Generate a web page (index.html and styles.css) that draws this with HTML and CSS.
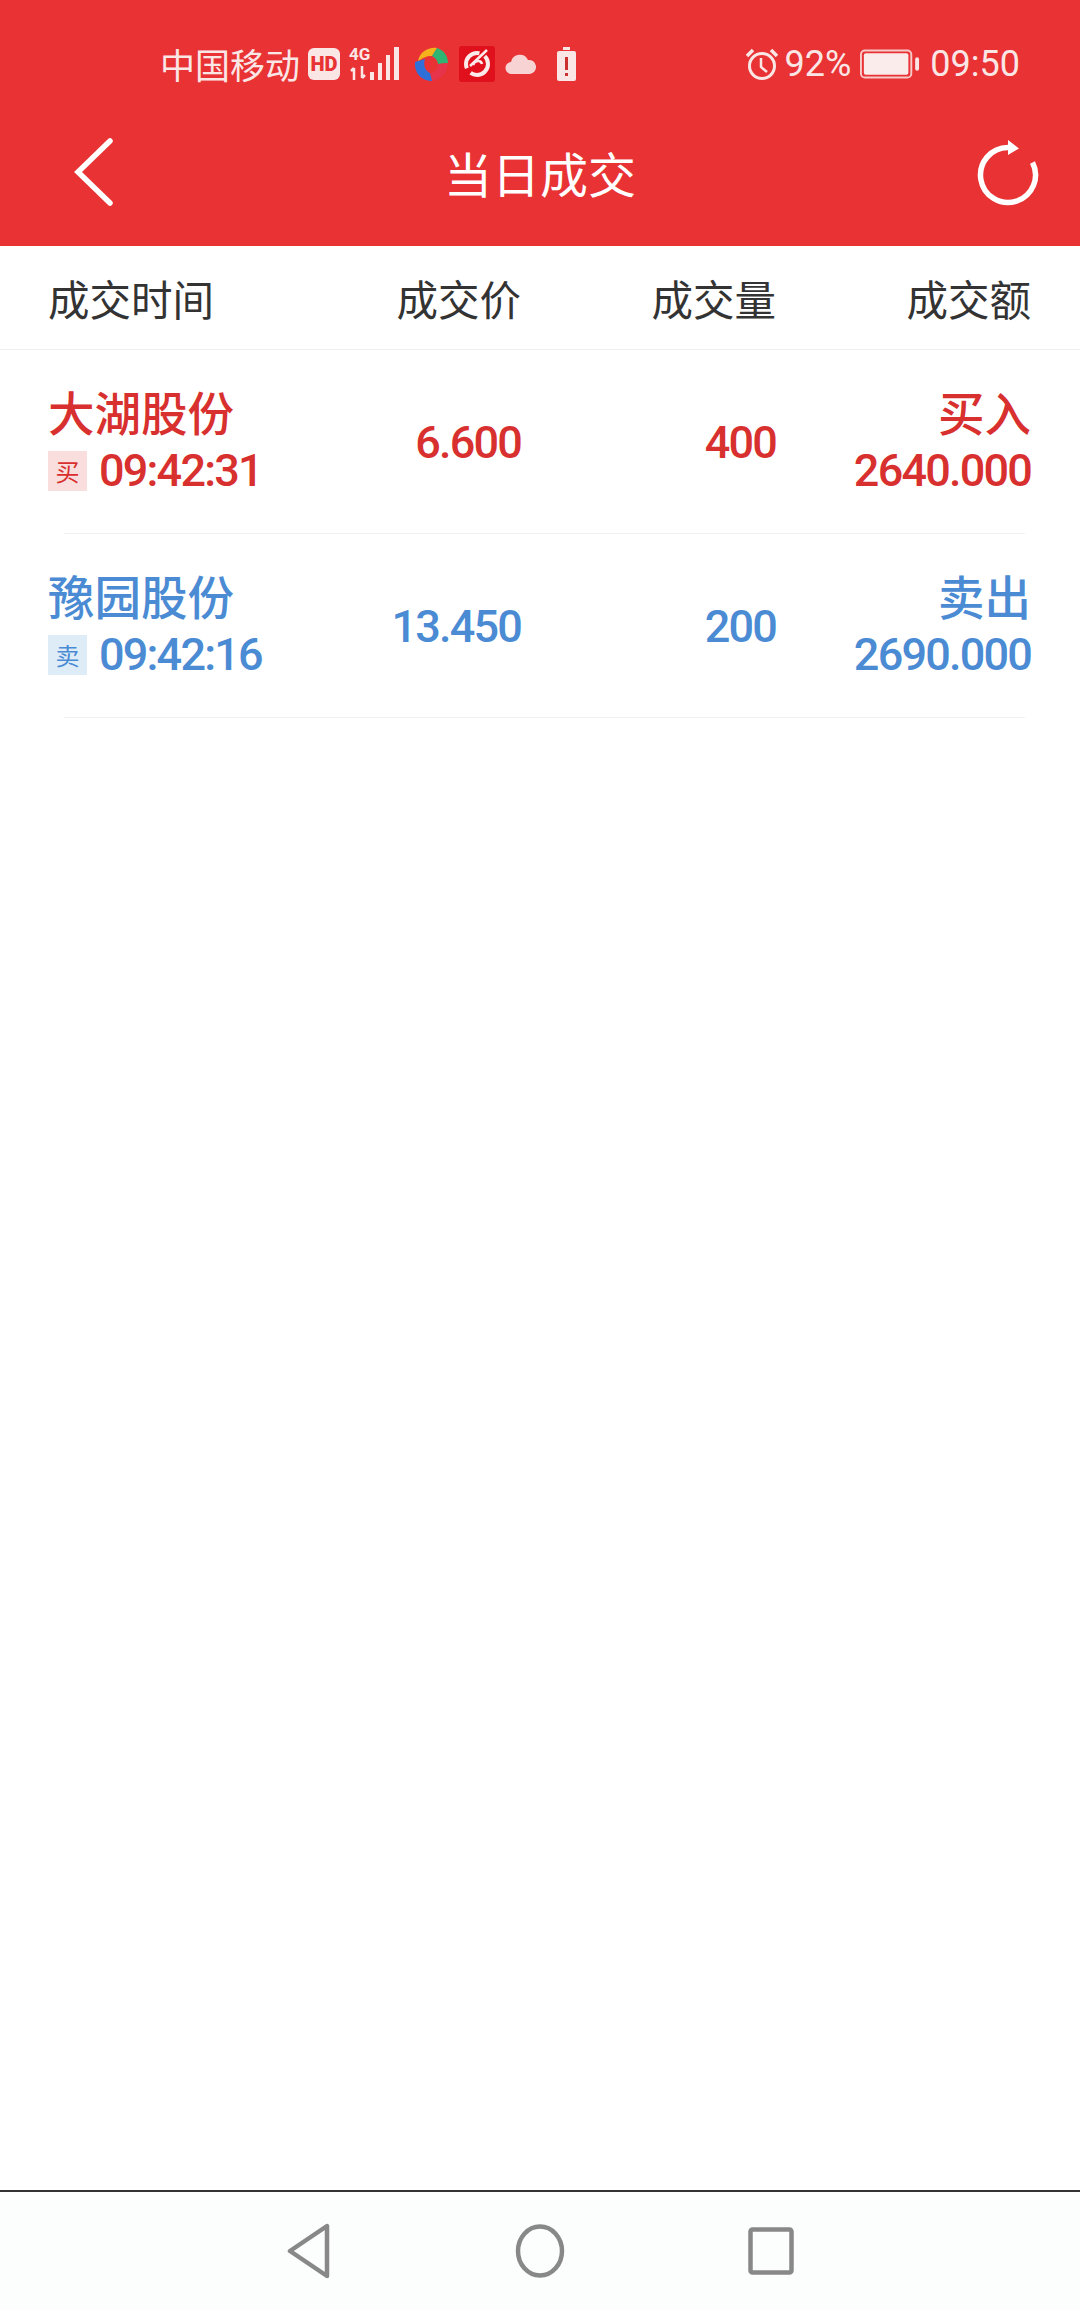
FILE: index.html
```html
<!DOCTYPE html>
<html lang="zh-CN">
<head>
    <meta charset="UTF-8">
    <title>当日成交</title>
    <link rel="stylesheet" href="styles.css">
</head>
<body>
    <div class="page">
        <div class="top">
            <div class="status">
                <span class="carrier">中国移动</span>
                <span class="hd">HD</span>
                <svg class="signal" width="54" height="36" viewBox="0 0 54 36">
                    <text x="0" y="14" class="net">4G</text>
                    <path d="M5 22v12M2 25l3-3M13 20v12M13 32l3-3" stroke="#fbe6e6" stroke-width="2.5" fill="none"/>
                    <rect x="21" y="26" width="4" height="8" fill="#fbe6e6"/>
                    <rect x="29" y="17" width="4" height="17" fill="#fbe6e6"/>
                    <rect x="37" y="9" width="4" height="25" fill="#fbe6e6"/>
                    <rect x="45" y="1" width="5" height="33" fill="#fbe6e6"/>
                </svg>
                <svg class="pin" width="36" height="36" viewBox="0 0 36 36">
                    <path d="M5 15C7 6 15 1 24 2l-5 8c-6 0-9 2-14 5z" fill="#f5b21d"/>
                    <path d="M24 2c7 2 11 8 11 15l-10 1c0-3-2-6-6-8z" fill="#2fb573"/>
                    <path d="M35 17c0 9-7 17-16 18l-2-8c5 0 8-4 8-9z" fill="#e8344a"/>
                    <path d="M19 35C8 35 1 26 2 16l10-3c-2 6 0 12 5 14z" fill="#2f6fd8"/>
                </svg>
                <svg class="pin" width="36" height="36" viewBox="0 0 36 36">
                    <rect width="36" height="36" rx="3" fill="#e0101c"/>
                    <circle cx="18" cy="18" r="11" fill="none" stroke="#fdeaea" stroke-width="4" stroke-dasharray="24 6"/>
                    <path d="M11 20l17-16M14 19c2-5 8-5 9-1" stroke="#fdeaea" stroke-width="2.5" fill="none"/>
                </svg>
                <svg class="pin" width="32" height="22" viewBox="0 0 32 22">
                    <path d="M7 21a6 6 0 0 1-1-12 9 9 0 0 1 17-2 7 7 0 0 1 2 14z" fill="#f7d3d3"/>
                </svg>
                <svg class="pin-far" width="21" height="36" viewBox="0 0 21 36">
                    <path d="M7 1h7v3H7z" fill="#fbe6e6"/>
                    <rect x="1" y="5" width="19" height="30" rx="2" fill="#fbe6e6"/>
                    <path d="M10.500 11v13M10.500 27v3" stroke="#c9302f" stroke-width="3"/>
                </svg>
                <div class="status-right">
                    <svg width="34" height="34" viewBox="0 0 34 34">
                        <circle cx="17" cy="19" r="12.500" fill="none" stroke="#fbe6e6" stroke-width="3"/>
                        <path d="M16 11v9l6 5" fill="none" stroke="#fbe6e6" stroke-width="2.500"/>
                        <path d="M2 9l6-6M32 9l-6-6" stroke="#fbe6e6" stroke-width="3.500"/>
                    </svg>
                    <span class="pct">92%</span>
                    <svg class="batt" width="60" height="30" viewBox="0 0 62 30">
                        <rect x="1" y="1" width="52" height="28" rx="4" fill="none" stroke="#f7c9c9" stroke-width="2"/>
                        <rect x="4" y="4" width="46" height="22" rx="2" fill="#fbecec"/>
                        <rect x="57" y="8" width="4" height="14" rx="2" fill="#fbe6e6"/>
                    </svg>
                    <span class="clock">09:50</span>
                </div>
            </div>
            <div class="nav">
                <div class="nav-side">
                    <svg width="44" height="70" viewBox="0 0 44 70">
                        <path d="M38 4L6 35l32 31" fill="none" stroke="#fff" stroke-width="5.500" stroke-linecap="round"/>
                    </svg>
                </div>
                <h1>当日成交</h1>
                <div class="nav-side right">
                    <svg width="70" height="76" viewBox="0 0 70 76">
                        <path d="M35 13.500A27.500 27.500 0 1 0 59.500 28.500" fill="none" stroke="#fff" stroke-width="5.500"/>
                        <path d="M35 6l11 8.500L35 21z" fill="#fff"/>
                    </svg>
                </div>
            </div>
        </div>

        <div class="list-head">
            <span>成交时间</span>
            <span>成交价</span>
            <span>成交量</span>
            <span>成交额</span>
        </div>

        <div class="row buy">
            <div class="stock">
                <div class="name">大湖股份</div>
                <div class="time"><span class="tag">买</span>09:42:31</div>
            </div>
            <div class="num">6.600</div>
            <div class="num">400</div>
            <div class="amount">
                <div class="name">买入</div>
                <div class="num">2640.000</div>
            </div>
        </div>
        <div class="sep"></div>

        <div class="row sell">
            <div class="stock">
                <div class="name">豫园股份</div>
                <div class="time"><span class="tag">卖</span>09:42:16</div>
            </div>
            <div class="num">13.450</div>
            <div class="num">200</div>
            <div class="amount">
                <div class="name">卖出</div>
                <div class="num">2690.000</div>
            </div>
        </div>
        <div class="sep"></div>

        <div class="empty"></div>

        <div class="softkeys">
            <svg width="46" height="56" viewBox="0 0 46 56">
                <path d="M41 3v50L4 28z" fill="none" stroke="#888" stroke-width="4.500" stroke-linejoin="round"/>
            </svg>
            <svg width="52" height="56" viewBox="0 0 52 56">
                <ellipse cx="26" cy="28" rx="22" ry="24.500" fill="none" stroke="#888" stroke-width="4.500"/>
            </svg>
            <svg width="46" height="48" viewBox="0 0 46 48">
                <rect x="2.500" y="2.500" width="41" height="43" rx="2" fill="none" stroke="#888" stroke-width="4.500"/>
            </svg>
        </div>
    </div>
</body>
</html>
```

FILE: styles.css
```css
body {
    margin: 0;
    background-color: #fff;
    font-family: "Noto Sans CJK SC", sans-serif;
}
.page {
    display: flex;
    flex-direction: column;
    height: 2310px;
}
.top {
    background-color: #e83234;
    height: 246px;
    color: #fff;
}
.status {
    display: flex;
    align-items: center;
    height: 52px;
    padding: 38px 60px 0 160px;
    color: #fbe6e6;
}
.carrier {
    font-size: 35px;
    line-height: 52px;
}
.hd {
    width: 32px;
    height: 32px;
    line-height: 32px;
    margin-left: 8px;
    border-radius: 6px;
    background-color: #fbe6e6;
    color: #e83234;
    font-family: Roboto, sans-serif;
    font-size: 20px;
    font-weight: 900;
    text-align: center;
}
.signal {
    margin-left: 9px;
}
.net {
    font-family: Roboto, sans-serif;
    font-size: 17px;
    font-weight: 700;
    fill: #fbe6e6;
}
.pin {
    margin-left: 10px;
}
.pin-far {
    margin-left: 19px;
}
.status-right {
    display: flex;
    align-items: center;
    margin-left: auto;
    font-family: Roboto, sans-serif;
    font-size: 36px;
}
.pct {
    margin-left: 6px;
}
.batt {
    margin-left: 9px;
}
.clock {
    margin-left: 10px;
}
.nav {
    display: flex;
    align-items: center;
    height: 122px;
    margin-top: 21px;
}
.nav-side {
    display: flex;
    align-items: center;
    width: 130px;
    padding-left: 72px;
    box-sizing: border-box;
}
.nav-side.right {
    justify-content: flex-end;
    padding: 0 37px 0 0;
}
h1 {
    flex: 1;
    margin: 0;
    font-size: 48px;
    font-weight: 400;
    text-align: center;
}
.list-head {
    display: grid;
    grid-template-columns: 260px 213px 255px 255px;
    align-items: center;
    height: 103px;
    padding: 0 49px 0 48px;
    border-bottom: 1px solid #eceef0;
    font-size: 41.500px;
    color: #333;
}
.list-head span,
.row > .num,
.amount {
    text-align: right;
}
.list-head span:first-child {
    text-align: left;
}
.row {
    display: grid;
    grid-template-columns: 260px 213px 255px 255px;
    align-items: center;
    height: 183px;
    padding: 0 49px 0 48px;
}
.row > .num {
    padding-top: 2px;
}
.buy {
    color: #d8302f;
}
.sell {
    color: #4a8bd4;
}
.name {
    height: 58px;
    line-height: 58px;
    font-size: 46.500px;
    font-weight: 500;
}
.num,
.time {
    height: 62px;
    line-height: 62px;
    font-family: Roboto, sans-serif;
    font-size: 45px;
    font-weight: 500;
    letter-spacing: -1.800px;
}
.time {
    display: flex;
    align-items: center;
}
.tag {
    width: 39px;
    height: 40px;
    line-height: 40px;
    margin-right: 12px;
    font-family: "Noto Sans CJK SC", sans-serif;
    font-size: 24px;
    font-weight: 400;
    letter-spacing: 0;
    text-align: center;
}
.buy .tag {
    background-color: #f9dedd;
}
.sell .tag {
    background-color: #deecf8;
}
.sep {
    height: 1px;
    margin: 0 55px 0 64px;
    background-color: #eef0f1;
}
.empty {
    flex: 1;
}
.softkeys {
    display: flex;
    align-items: center;
    justify-content: center;
    gap: 182px;
    height: 120px;
    border-top: 2px solid #333;
    background-color: #fcfdfd;
    box-sizing: border-box;
}
```
